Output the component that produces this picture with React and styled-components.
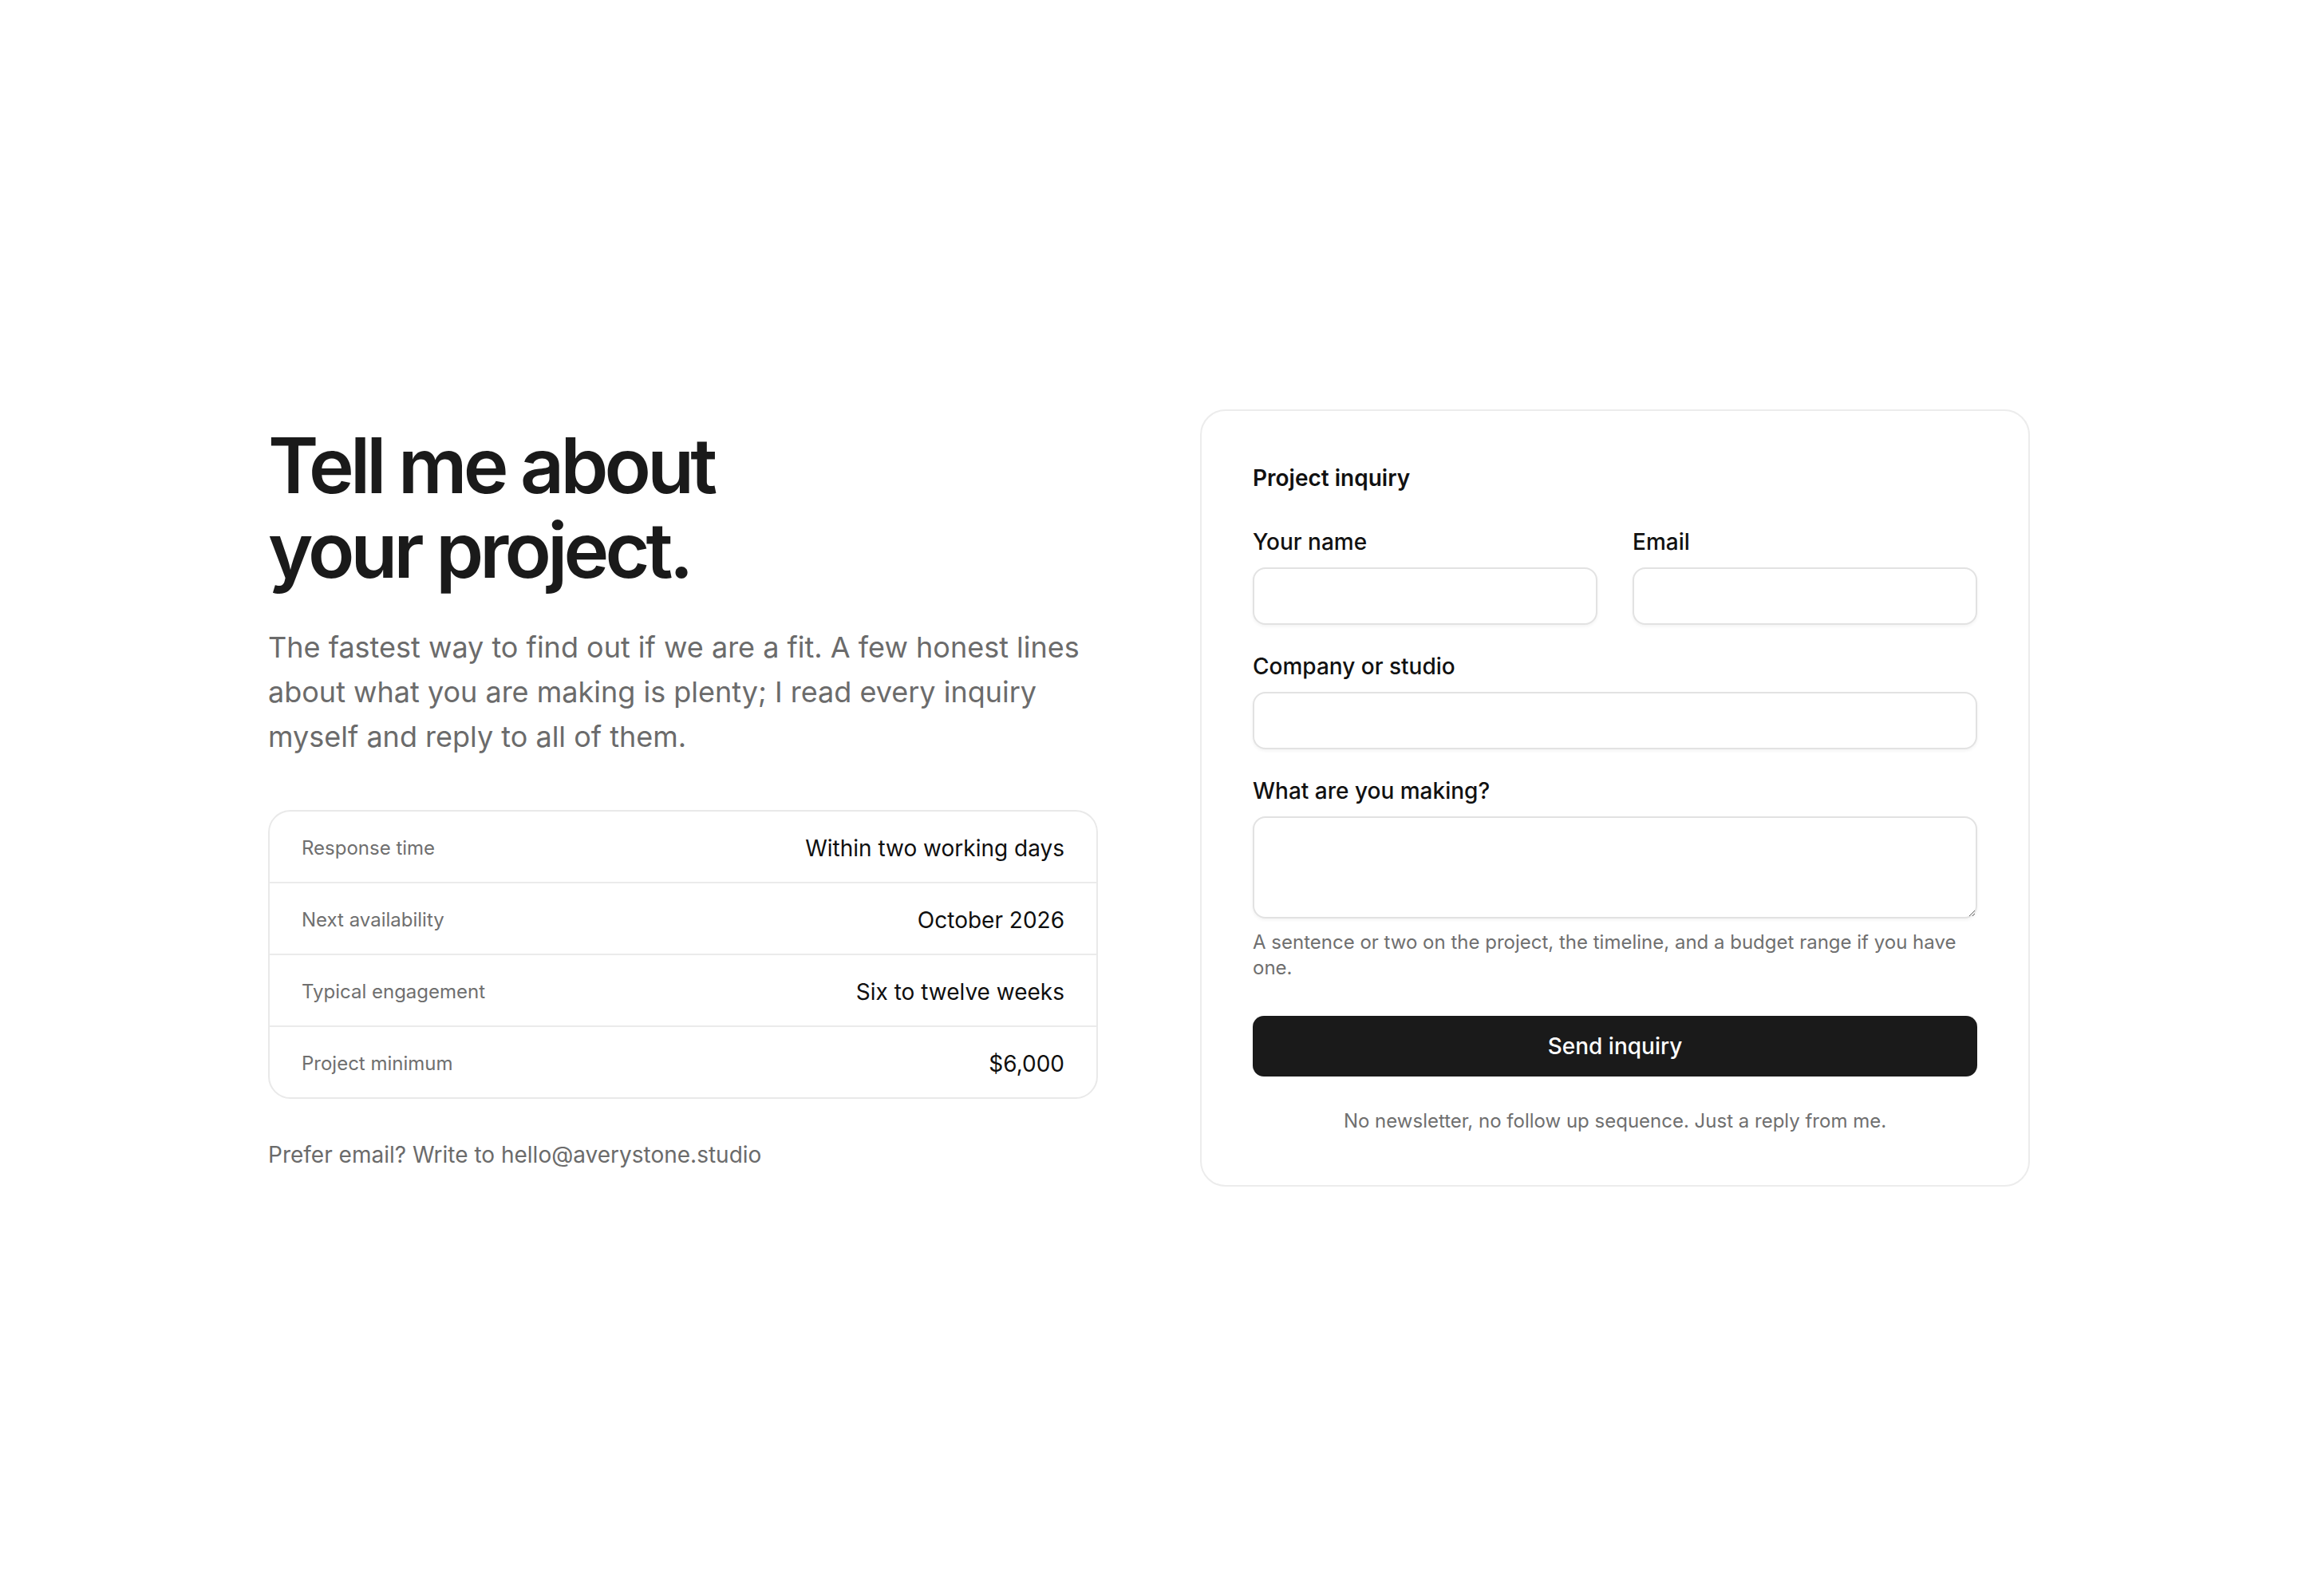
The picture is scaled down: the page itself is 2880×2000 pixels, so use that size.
import React from 'react';
import styled, { createGlobalStyle } from 'styled-components';

const GlobalStyle = createGlobalStyle`
  * { box-sizing: border-box; }
  body {
    margin: 0;
    background: #ffffff;
    color: #1a1a1a;
    font-family: Inter, "Noto Sans", "Liberation Sans", sans-serif;
    -webkit-font-smoothing: antialiased;
  }
`;

const Page = styled.main`
  min-height: 100vh;
  display: flex;
  align-items: center;
  justify-content: center;
  padding: 0 96px;
`;

const Layout = styled.div`
  width: 100%;
  max-width: 2208px;
  display: grid;
  grid-template-columns: 1fr 1fr;
  gap: 128px;
  align-items: center;
`;

const Intro = styled.section`
  display: flex;
  flex-direction: column;
`;

const Heading = styled.h1`
  margin: 0;
  font-size: 96px;
  line-height: 1.1;
  font-weight: 600;
  letter-spacing: -0.05em;
  color: #1a1a1a;
`;

const Lead = styled.p`
  margin: 40px 0 0;
  font-size: 36px;
  line-height: 56px;
  color: #6b6b6b;
`;

const Facts = styled.dl`
  margin: 64px 0 0;
  border: 2px solid #e9e9e9;
  border-radius: 28px;
  overflow: hidden;
`;

const FactRow = styled.div`
  display: flex;
  align-items: center;
  justify-content: space-between;
  padding: 26px 40px 22px;
  border-top: ${(p) => (p.$first ? 'none' : '2px solid #ebebeb')};
`;

const FactLabel = styled.dt`
  font-size: 24px;
  line-height: 40px;
  color: #6f6f6f;
`;

const FactValue = styled.dd`
  margin: 0;
  font-size: 28px;
  line-height: 40px;
  color: #0f0f0f;
`;

const Aside = styled.p`
  margin: 48px 0 0;
  font-size: 28px;
  line-height: 44px;
  color: #6b6b6b;
`;

const Card = styled.form`
  border: 2px solid #ececec;
  border-radius: 32px;
  padding: 64px;
  background: #fff;
  display: flex;
  flex-direction: column;
`;

const CardTitle = styled.h2`
  margin: 0 0 40px;
  font-size: 28px;
  line-height: 40px;
  font-weight: 600;
  color: #111111;
`;

const Fields = styled.div`
  display: grid;
  grid-template-columns: 1fr 1fr;
  column-gap: 44px;
  row-gap: 32px;
`;

const Field = styled.label`
  display: flex;
  flex-direction: column;
  gap: 12px;
  grid-column: ${(p) => (p.$wide ? '1 / -1' : 'auto')};
`;

const FieldLabel = styled.span`
  font-size: 28px;
  line-height: 40px;
  font-weight: 500;
  color: #111111;
`;

const Input = styled.input`
  height: 72px;
  width: 100%;
  border: 2px solid #e2e2e2;
  border-radius: 16px;
  padding: 0 24px;
  font: inherit;
  font-size: 28px;
  background: #fff;
  box-shadow: 0 2px 4px rgba(0, 0, 0, 0.05);
  outline: none;
`;

const TextArea = styled.textarea`
  height: 128px;
  width: 100%;
  border: 2px solid #e2e2e2;
  border-radius: 16px;
  padding: 16px 24px;
  font: inherit;
  font-size: 28px;
  background: #fff;
  box-shadow: 0 2px 4px rgba(0, 0, 0, 0.05);
  resize: vertical;
  outline: none;
`;

const Hint = styled.span`
  margin-top: 2px;
  font-size: 24px;
  line-height: 32px;
  color: #6f6f6f;
`;

const Submit = styled.button`
  margin-top: 44px;
  height: 76px;
  width: 100%;
  border: none;
  border-radius: 14px;
  background: #1a1a1a;
  color: #ffffff;
  font: inherit;
  font-size: 28px;
  font-weight: 500;
  cursor: pointer;
`;

const Note = styled.p`
  margin: 40px 0 0;
  text-align: center;
  font-size: 24px;
  line-height: 32px;
  color: #6f6f6f;
`;

const facts = [
  ['Response time', 'Within two working days'],
  ['Next availability', 'October 2026'],
  ['Typical engagement', 'Six to twelve weeks'],
  ['Project minimum', '$6,000'],
];

export default function App() {
  return (
    <>
      <GlobalStyle />
      <Page>
        <Layout>
          <Intro>
            <Heading>
              Tell me about
              <br />
              your project.
            </Heading>
            <Lead>
              The fastest way to find out if we are a fit. A few honest lines
              about what you are making is plenty; I read every inquiry myself
              and reply to all of them.
            </Lead>
            <Facts>
              {facts.map(([label, value], i) => (
                <FactRow key={label} $first={i === 0}>
                  <FactLabel>{label}</FactLabel>
                  <FactValue>{value}</FactValue>
                </FactRow>
              ))}
            </Facts>
            <Aside>Prefer email? Write to hello@averystone.studio</Aside>
          </Intro>

          <Card onSubmit={(e) => e.preventDefault()}>
            <CardTitle>Project inquiry</CardTitle>
            <Fields>
              <Field>
                <FieldLabel>Your name</FieldLabel>
                <Input type="text" />
              </Field>
              <Field>
                <FieldLabel>Email</FieldLabel>
                <Input type="email" />
              </Field>
              <Field $wide>
                <FieldLabel>Company or studio</FieldLabel>
                <Input type="text" />
              </Field>
              <Field $wide>
                <FieldLabel>What are you making?</FieldLabel>
                <TextArea />
                <Hint>
                  A sentence or two on the project, the timeline, and a budget
                  range if you have one.
                </Hint>
              </Field>
            </Fields>
            <Submit type="submit">Send inquiry</Submit>
            <Note>No newsletter, no follow up sequence. Just a reply from me.</Note>
          </Card>
        </Layout>
      </Page>
    </>
  );
}
